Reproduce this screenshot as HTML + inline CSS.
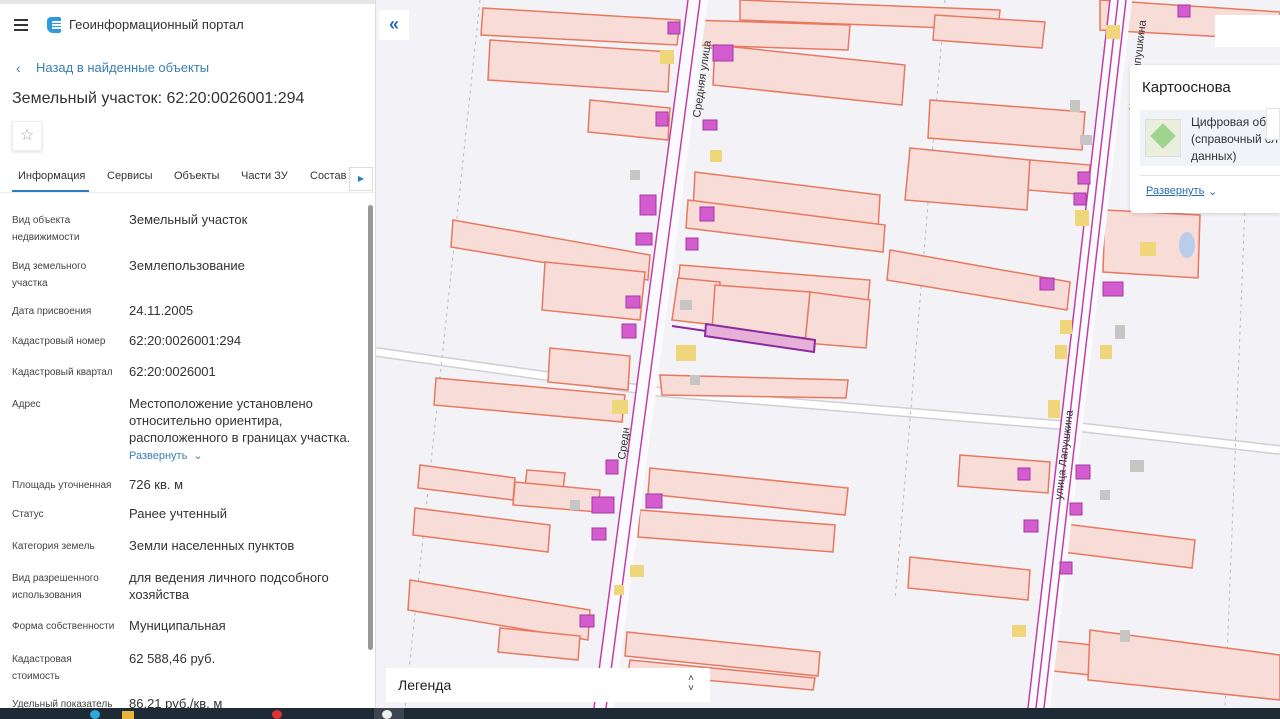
<!DOCTYPE html>
<html><head><meta charset="utf-8"><style>
*{margin:0;padding:0;box-sizing:border-box}
body{width:1280px;height:719px;overflow:hidden;font-family:"Liberation Sans",sans-serif;position:relative;background:#f3f3f6}
#panel{position:absolute;left:0;top:0;width:376px;height:708px;background:#fff;overflow:hidden;border-right:1px solid #ddd}
.lbl{position:absolute;left:12px;font-size:10px;color:#444;line-height:17px;width:110px}
.val{position:absolute;left:129px;font-size:13px;color:#333;line-height:17px;width:235px}
#map{position:absolute;left:376px;top:0;width:904px;height:708px}
#task{position:absolute;left:0;top:708px;width:1280px;height:11px;background:#1e2a36}
</style></head><body>
<div id="panel">
 <div style="position:absolute;left:0;top:0;width:376px;height:4px;background:#e6e6e6"></div>
 <div style="position:absolute;left:14px;top:19px;width:14px;height:2px;background:#333;box-shadow:0 5px 0 #333,0 10px 0 #333"></div>
 <div style="position:absolute;left:47px;top:17px;width:14px;height:16px;border-radius:4px 2px 2px 6px;background:#2a9be0"></div>
 <div style="position:absolute;left:52px;top:21px;width:9px;height:2px;background:#fff;box-shadow:0 3px 0 #fff,0 6px 0 #fff"></div>
 <div style="position:absolute;left:69px;top:17px;font-size:13px;color:#333">Геоинформационный портал</div>
 <div style="position:absolute;left:16px;top:60px;font-size:14px;color:#3a7fb5">‹</div>
 <div style="position:absolute;left:36px;top:60px;font-size:13px;color:#3a7fb5">Назад в найденные объекты</div>
 <div style="position:absolute;left:12px;top:90px;font-size:16px;color:#333">Земельный участок: 62:20:0026001:294</div>
 <div style="position:absolute;left:12px;top:121px;width:30px;height:30px;border:1px solid #eee;box-shadow:0 1px 3px #ddd;font-size:16px;color:#aaa;text-align:center;line-height:28px">☆</div>
 <div style="position:absolute;top:170px;left:18px;font-size:11px;color:#333">Информация</div>
 <div style="position:absolute;top:190px;left:12px;width:77px;height:2px;background:#2b7cc0"></div>
 <div style="position:absolute;top:170px;left:107px;font-size:11px;color:#333">Сервисы</div>
 <div style="position:absolute;top:170px;left:174px;font-size:11px;color:#333">Объекты</div>
 <div style="position:absolute;top:170px;left:241px;font-size:11px;color:#333">Части ЗУ</div>
 <div style="position:absolute;top:170px;left:310px;font-size:11px;color:#333">Состав</div>
 <div style="position:absolute;top:167px;left:349px;width:24px;height:24px;border:1px solid #ddd;background:#fff;font-size:8px;color:#2b7cc0;text-align:center;line-height:22px">▶</div>
 <div style="position:absolute;top:192px;left:0;width:376px;height:1px;background:#eee"></div>
 <div style="position:absolute;left:368px;top:205px;width:5px;height:445px;background:#999;border-radius:3px"></div>
 <div class="lbl" style="top:212px">Вид объекта недвижимости</div><div class="val" style="top:211px">Земельный участок</div>
 <div class="lbl" style="top:258px">Вид земельного участка</div><div class="val" style="top:257px">Землепользование</div>
 <div class="lbl" style="top:303px">Дата присвоения</div><div class="val" style="top:302px">24.11.2005</div>
 <div class="lbl" style="top:333px">Кадастровый номер</div><div class="val" style="top:332px">62:20:0026001:294</div>
 <div class="lbl" style="top:364px">Кадастровый квартал</div><div class="val" style="top:363px">62:20:0026001</div>
 <div class="lbl" style="top:396px">Адрес</div><div class="val" style="top:395px">Местоположение установлено относительно ориентира, расположенного в границах участка.</div>
 <div style="position:absolute;left:129px;top:449px;font-size:11px;color:#3a7fb5">Развернуть &nbsp;⌄</div>
 <div class="lbl" style="top:477px">Площадь уточненная</div><div class="val" style="top:476px">726 кв. м</div>
 <div class="lbl" style="top:506px">Статус</div><div class="val" style="top:505px">Ранее учтенный</div>
 <div class="lbl" style="top:538px">Категория земель</div><div class="val" style="top:537px">Земли населенных пунктов</div>
 <div class="lbl" style="top:570px">Вид разрешенного использования</div><div class="val" style="top:569px">для ведения личного подсобного хозяйства</div>
 <div class="lbl" style="top:618px">Форма собственности</div><div class="val" style="top:617px">Муниципальная</div>
 <div class="lbl" style="top:651px">Кадастровая стоимость</div><div class="val" style="top:650px">62 588,46 руб.</div>
 <div class="lbl" style="top:696px">Удельный показатель</div><div class="val" style="top:695px">86,21 руб./кв. м</div>
</div>
<svg id="map" viewBox="376 0 904 708" xmlns="http://www.w3.org/2000/svg">
<rect x="376" y="0" width="904" height="708" fill="#f3f3f7"/>
<path d="M376,352 L660,392 L1060,425 L1280,450" stroke="#cfcfd4" stroke-width="10" fill="none"/>
<path d="M376,352 L660,392 L1060,425 L1280,450" stroke="#fff" stroke-width="7" fill="none"/>
<g stroke="#bbb" stroke-dasharray="3 4" fill="none"><path d="M480,0 L405,708"/><path d="M945,0 L895,600"/><path d="M1250,80 L1225,708"/></g>
<g fill="#f8dcd7" stroke="#e8785f" stroke-width="1.5">
<polygon points="483,8 680,20 677,45 481,35"/><polygon points="490,40 670,52 668,92 488,80"/>
<polygon points="690,20 850,25 848,50 690,45"/><polygon points="715,45 905,65 902,105 713,85"/>
<polygon points="740,0 1000,10 998,30 740,20"/><polygon points="935,15 1045,22 1042,48 933,40"/>
<polygon points="930,100 1085,112 1082,150 928,138"/><polygon points="910,148 1030,160 1027,210 905,200"/>
<polygon points="1030,160 1090,165 1088,195 1028,190"/><polygon points="590,100 670,108 668,140 588,132"/>
<polygon points="695,172 880,195 878,230 693,210"/><polygon points="688,200 885,225 883,252 686,228"/>
<polygon points="453,220 650,255 648,280 451,247"/><polygon points="545,262 645,272 640,320 542,310"/>
<polygon points="680,265 870,280 868,300 678,285"/><polygon points="678,278 720,282 716,325 672,320"/>
<polygon points="715,285 810,292 806,338 712,330"/><polygon points="810,292 870,300 866,348 805,343"/>
<polygon points="890,250 1070,282 1067,310 887,280"/><polygon points="1105,210 1200,215 1198,278 1103,272"/>
<polygon points="550,348 630,356 628,390 548,382"/><polygon points="660,375 848,380 846,398 662,395"/>
<polygon points="436,378 625,395 622,422 434,405"/><polygon points="650,468 848,488 845,515 648,494"/>
<polygon points="640,510 835,525 833,552 638,537"/><polygon points="960,455 1050,462 1048,493 958,486"/>
<polygon points="420,465 515,478 513,500 418,488"/><polygon points="527,470 565,473 563,490 525,487"/>
<polygon points="515,482 600,490 598,512 513,505"/><polygon points="415,508 550,525 548,552 413,535"/>
<polygon points="1065,524 1195,540 1192,568 1062,552"/><polygon points="910,557 1030,570 1028,600 908,588"/>
<polygon points="410,580 590,610 588,640 408,610"/><polygon points="500,628 580,636 578,660 498,652"/>
<polygon points="627,632 820,652 818,676 625,656"/><polygon points="630,660 815,678 813,690 628,673"/>
<polygon points="1045,640 1140,650 1138,680 1043,670"/><polygon points="1090,630 1280,655 1280,700 1088,680"/>
<polygon points="1100,0 1280,12 1280,40 1100,30"/>
</g>
<polygon points="706,324 815,340 814,352 705,336" fill="#e6b0d8" stroke="#8a2aa0" stroke-width="2"/>
<line x1="672" y1="326" x2="706" y2="331" stroke="#8a2aa0" stroke-width="2"/>
<g fill="#fbfaff"><polygon points="688,0 708,0 614,708 594,708"/><polygon points="1110,0 1132,0 1050,708 1028,708"/></g>
<g stroke="#c040a8" stroke-width="1.5"><line x1="688" y1="0" x2="594" y2="708"/><line x1="700" y1="0" x2="606" y2="708"/><line x1="1110" y1="0" x2="1028" y2="708"/><line x1="1118" y1="0" x2="1036" y2="708"/><line x1="1126" y1="0" x2="1044" y2="708"/></g>
<g fill="#d45ccf" stroke="#a03aa0"><rect x="656" y="112" width="12" height="14"/><rect x="703" y="120" width="14" height="10"/><rect x="640" y="195" width="16" height="20"/><rect x="700" y="207" width="14" height="14"/><rect x="636" y="233" width="16" height="12"/><rect x="686" y="238" width="12" height="12"/><rect x="626" y="296" width="14" height="12"/><rect x="622" y="324" width="14" height="14"/><rect x="713" y="45" width="20" height="16"/><rect x="668" y="22" width="12" height="12"/><rect x="1040" y="278" width="14" height="12"/><rect x="1103" y="282" width="20" height="14"/><rect x="1078" y="172" width="12" height="12"/><rect x="1074" y="193" width="12" height="12"/><rect x="1178" y="5" width="12" height="12"/><rect x="606" y="460" width="12" height="14"/><rect x="592" y="497" width="22" height="16"/><rect x="646" y="494" width="16" height="14"/><rect x="592" y="528" width="14" height="12"/><rect x="1018" y="468" width="12" height="12"/><rect x="1076" y="465" width="14" height="14"/><rect x="1070" y="503" width="12" height="12"/><rect x="1024" y="520" width="14" height="12"/><rect x="1060" y="562" width="12" height="12"/><rect x="580" y="615" width="14" height="12"/></g>
<g fill="#f0d67a"><rect x="660" y="50" width="14" height="14"/><rect x="710" y="150" width="12" height="12"/><rect x="1075" y="210" width="14" height="16"/><rect x="1060" y="320" width="12" height="14"/><rect x="1055" y="345" width="12" height="14"/><rect x="1048" y="400" width="12" height="18"/><rect x="676" y="345" width="20" height="16"/><rect x="612" y="400" width="16" height="14"/><rect x="630" y="565" width="14" height="12"/><rect x="614" y="585" width="10" height="10"/><rect x="1012" y="625" width="14" height="12"/><rect x="1100" y="345" width="12" height="14"/><rect x="1140" y="242" width="16" height="14"/><rect x="1106" y="25" width="14" height="14"/></g>
<g fill="#c8c5c5"><rect x="630" y="170" width="10" height="10"/><rect x="680" y="300" width="12" height="10"/><rect x="690" y="375" width="10" height="10"/><rect x="570" y="500" width="10" height="10"/><rect x="1080" y="135" width="12" height="10"/><rect x="1070" y="100" width="10" height="12"/><rect x="1115" y="325" width="10" height="14"/><rect x="1100" y="490" width="10" height="10"/><rect x="1130" y="460" width="14" height="12"/><rect x="1120" y="630" width="10" height="12"/></g>
<ellipse cx="1187" cy="245" rx="8" ry="13" fill="#b9cdea"/>
<text transform="translate(700,118) rotate(-82)" font-size="11" fill="#333" font-family="Liberation Sans">Средняя улица</text>
<text transform="translate(625,460) rotate(-82)" font-size="11" fill="#333" font-family="Liberation Sans">Средн</text>
<text transform="translate(1135,110) rotate(-83)" font-size="11" fill="#333" font-family="Liberation Sans">улица Лапушкина</text>
<text transform="translate(1062,500) rotate(-83)" font-size="11" fill="#333" font-family="Liberation Sans">улица Лапушкина</text>
</svg>
<div style="position:absolute;left:379px;top:10px;width:30px;height:30px;background:#fff;border-radius:2px;color:#2b6cb0;font-size:18px;font-weight:bold;text-align:center;line-height:28px">«</div>
<div style="position:absolute;left:1215px;top:15px;width:65px;height:32px;background:#fff"></div>
<div style="position:absolute;left:1130px;top:65px;width:150px;height:148px;background:#fff;border-radius:4px 0 0 4px;box-shadow:0 1px 4px rgba(0,0,0,.15)">
 <div style="position:absolute;left:12px;top:14px;font-size:15px;color:#222">Картооснова</div>
 <div style="position:absolute;left:10px;top:45px;width:140px;height:56px;background:#f0f4f8"></div>
 <div style="position:absolute;left:15px;top:54px;width:36px;height:38px;background:#eceedd;border:1px solid #ddd"></div>
 <div style="position:absolute;left:24px;top:62px;width:18px;height:18px;background:#9ed48f;transform:rotate(45deg)"></div>
 <div style="position:absolute;left:61px;top:49px;font-size:12px;line-height:17px;color:#333;white-space:nowrap">Цифровая об<br>(справочный сл<br>данных)</div>
 <div style="position:absolute;left:136px;top:43px;width:14px;height:32px;background:#fff;border:1px solid #e4e4e4"></div>
 <div style="position:absolute;left:10px;top:110px;width:140px;height:1px;background:#e4e4e4"></div>
 <div style="position:absolute;left:16px;top:120px;font-size:11px;color:#2b6cb0;text-decoration:underline">Развернуть</div>
 <div style="position:absolute;left:78px;top:120px;font-size:11px;color:#2b6cb0">⌄</div>
</div>
<div style="position:absolute;left:386px;top:668px;width:324px;height:34px;background:#fff;border-radius:2px">
 <div style="position:absolute;left:12px;top:9px;font-size:14px;color:#222">Легенда</div>
 <div style="position:absolute;right:16px;top:6px;font-size:10px;line-height:10px;color:#333">˄<br>˅</div>
</div>
<div id="task">
 <div style="position:absolute;left:90px;top:2px;width:10px;height:9px;border-radius:50%;background:#2fa8d8"></div>
 <div style="position:absolute;left:122px;top:3px;width:12px;height:8px;background:#e8b33a"></div>
 <div style="position:absolute;left:272px;top:2px;width:10px;height:9px;border-radius:50%;background:#d33"></div>
 <div style="position:absolute;left:374px;top:0;width:30px;height:11px;background:#3c4650"></div>
 <div style="position:absolute;left:382px;top:2px;width:10px;height:9px;border-radius:50%;background:#eee"></div>
</div>
</body></html>
